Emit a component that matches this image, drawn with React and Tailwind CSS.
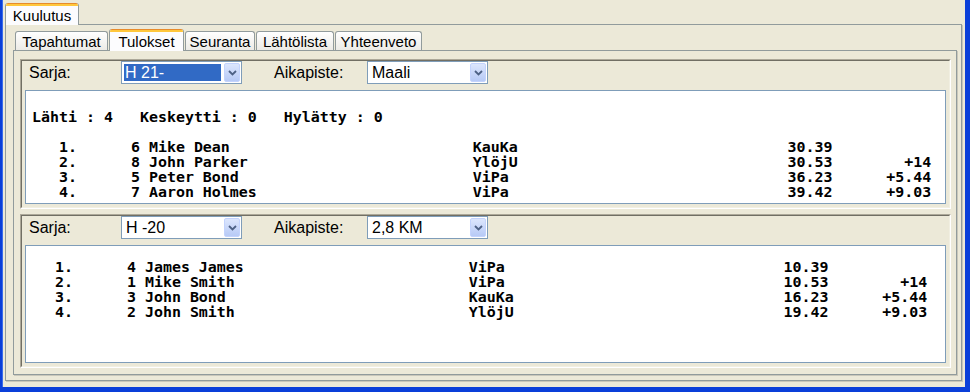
import React from "react";

const SANS = { fontFamily: '"Liberation Sans", Arial, sans-serif' };
const MONO = { fontFamily: '"DejaVu Sans Mono", "Liberation Mono", monospace' };

function row(pos, num, name, club, time, diff) {
  return (
    "   " +
    (pos + ".").padEnd(8) +
    (num + " " + name).padEnd(38) +
    club.padEnd(35) +
    time +
    diff.padStart(11)
  );
}

const box1 = [
  "",
  "Lähti : 4   Keskeytti : 0   Hylätty : 0",
  "",
  row(1, 6, "Mike Dean", "KauKa", "30.39", ""),
  row(2, 8, "John Parker", "YlöjU", "30.53", "+14"),
  row(3, 5, "Peter Bond", "ViPa", "36.23", "+5.44"),
  row(4, 7, "Aaron Holmes", "ViPa", "39.42", "+9.03"),
];

const box2 = [
  row(1, 4, "James James", "ViPa", "10.39", ""),
  row(2, 1, "Mike Smith", "ViPa", "10.53", "+14"),
  row(3, 3, "John Bond", "KauKa", "16.23", "+5.44"),
  row(4, 2, "John Smith", "YlöjU", "19.42", "+9.03"),
];

function Tab({ label, selected, w, h = "h-[19px]" }) {
  if (selected) {
    return (
      <div
        className={`${w} h-[22px] relative z-10 flex flex-col border-x border-[#919B9C] rounded-t-[3px] overflow-hidden bg-[#FCFCFE]`}
      >
        <div className="h-[1px] bg-[#E68B2C] shrink-0" />
        <div className="h-[2px] bg-[#FFC73C] shrink-0" />
        <div className="flex-1 flex items-center justify-center text-[15px] text-black leading-none pb-[1px]">
          {label}
        </div>
      </div>
    );
  }
  return (
    <div
      className={`${w} ${h} mb-[1px] flex items-center justify-center border border-b-0 border-[#919B9C] rounded-t-[3px] bg-gradient-to-b from-white to-[#ECEBE6] text-[15px] text-black leading-none pt-[1px]`}
    >
      {label}
    </div>
  );
}

function Chevron() {
  return (
    <svg width="9" height="6" viewBox="0 0 9 6">
      <path d="M1 1 L4.5 4.5 L8 1" fill="none" stroke="#4D6185" strokeWidth="1.8" />
    </svg>
  );
}

function Combo({ text, highlight }) {
  return (
    <div className="w-[121px] h-[23px] border border-[#7F9DB9] bg-white flex items-stretch p-[1px]">
      <div className="flex-1 flex items-center pl-[1px] pr-[3px] py-[1px]">
        <div
          className={
            highlight
              ? "w-full h-full flex items-center bg-[#316AC5] text-white pl-[1px] text-[16px] leading-none"
              : "w-full h-full flex items-center text-black pl-[2px] text-[16px] leading-none"
          }
        >
          {text}
        </div>
      </div>
      <div className="w-[16px] rounded-[2px] border border-[#C3D3FD] bg-[linear-gradient(#DCE6FD,#B7CAF6)] flex items-center justify-center">
        <Chevron />
      </div>
    </div>
  );
}

function Panel({ sarja, aika, highlight, lines, h, pt, pl }) {
  return (
    <div className={`${h} border-t border-l border-[#ACA899] border-r border-b border-r-white border-b-white`}>
      <div className="h-full border-t border-l border-[#716F64] border-r border-b border-r-[#F1EFE2] border-b-[#F1EFE2] flex flex-col px-[3px] pb-[3px]">
        <div className="h-[23px] flex items-center text-[16px] text-black">
          <span className="w-[96px] pl-[4px]">Sarja:</span>
          <Combo text={sarja} highlight={highlight} />
          <span className="w-[93px] ml-[32px]">Aikapiste:</span>
          <Combo text={aika} />
        </div>
        <div
          className={`mt-[6px] flex-1 border border-[#7F9DB9] bg-white ${pt} ${pl} whitespace-pre font-bold text-[14.95px] leading-[15px] text-black`}
          style={MONO}
        >
          {lines.map((l, i) => (
            <div key={i} className="h-[15px]">
              {l}
            </div>
          ))}
        </div>
      </div>
    </div>
  );
}

export default function App() {
  return (
    <div className="w-[970px] h-[392px] bg-[#0A3FD9] pl-[2px] pr-[5px] pb-[5px]" style={SANS}>
      <div className="w-full h-full bg-[#ECE9D8] border-l border-[#3A6BEA] flex flex-col pt-[3px] pl-[2px] pr-[3px]">
        {/* outer tab strip */}
        <div className="flex items-end -mb-[1px] relative z-10">
          <Tab label="Kuulutus" selected w="w-[74px]" />
        </div>
        {/* outer pane */}
        <div className="h-[357px] w-[957px] border border-[#919B9C] shadow-[1px_1px_0_#C9C7BA] flex flex-col pt-[4px] pl-[7px] pr-[4px] pb-[5px]">
          {/* inner tab strip */}
          <div className="flex items-end gap-[1px] pl-[2px] -mb-[1px] relative z-10">
            <Tab label="Tapahtumat" w="w-[93px]" />
            <Tab label="Tulokset" selected w="w-[75px]" />
            <Tab label="Seuranta" w="w-[70px]" />
            <Tab label="Lähtölista" w="w-[78px]" />
            <Tab label="Yhteenveto" w="w-[87px]" />
          </div>
          {/* inner pane */}
          <div className="flex-1 border border-[#919B9C] shadow-[1px_1px_0_#C9C7BA] flex flex-col gap-[5px] pt-[8px] pl-[6px] pr-[5px] pb-[6px]">
            <Panel
              h="h-[150px]"
              sarja="H 21-"
              aika="Maali"
              highlight
              lines={box1}
              pt="pt-[4px]"
              pl="pl-[6px]"
            />
            <Panel
              h="flex-1"
              sarja="H -20"
              aika="2,8 KM"
              lines={box2}
              pt="pt-[14px]"
              pl="pl-[2px]"
            />
          </div>
        </div>
      </div>
    </div>
  );
}
